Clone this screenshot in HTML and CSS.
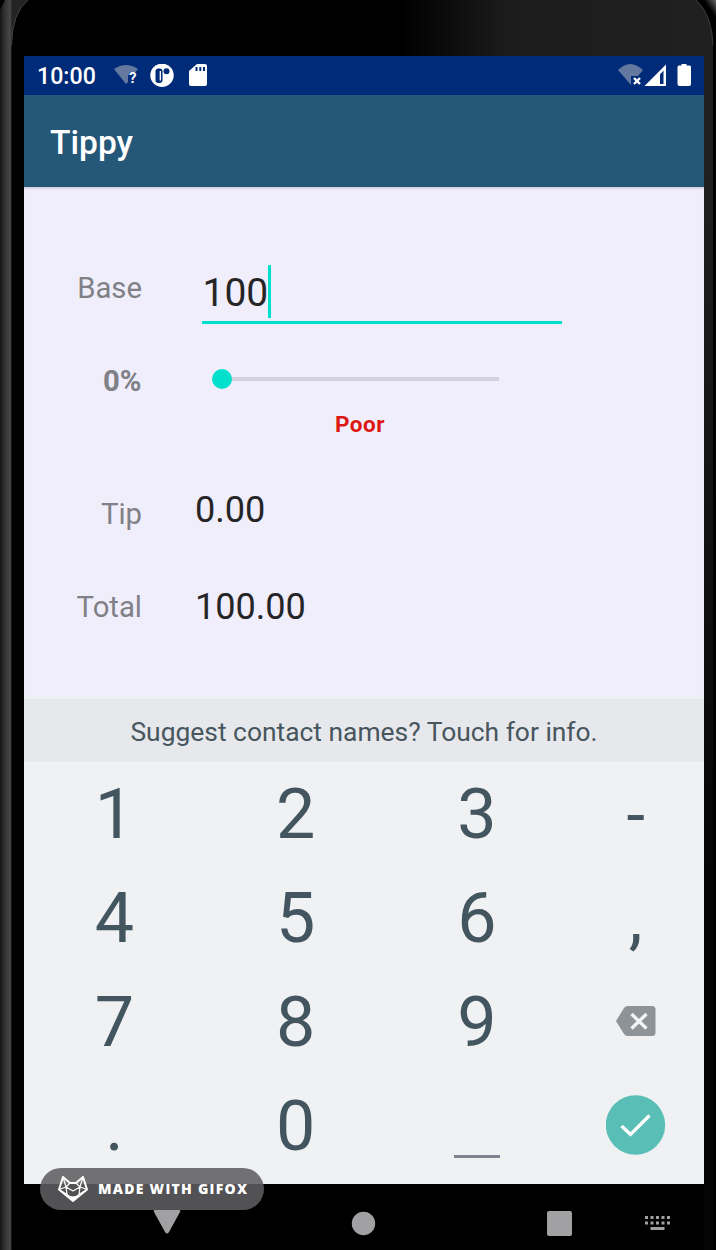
FILE: index.html
```html
<!DOCTYPE html>
<html lang="en">
<head>
<meta charset="utf-8">
<title>Tippy</title>
<link rel="stylesheet" href="styles.css">
</head>
<body>
<div class="device">
  <svg class="bezel" viewBox="0 0 716 1250">
    <defs>
      <linearGradient id="edge" x1="0" x2="12" y1="0" y2="0" gradientUnits="userSpaceOnUse"><stop offset="0" stop-color="#141414"/><stop offset=".3" stop-color="#2c2c2c"/><stop offset=".85" stop-color="#484848"/><stop offset="1" stop-color="#242424"/></linearGradient>
      <linearGradient id="glass" x1="400" x2="716" y1="0" y2="0" gradientUnits="userSpaceOnUse"><stop offset="0" stop-color="#000"/><stop offset=".35" stop-color="#1c1c1c"/><stop offset="1" stop-color="#202020"/></linearGradient>
      <linearGradient id="fade" x1="0" x2="0" y1="0" y2="1"><stop offset=".1" stop-color="#000" stop-opacity="0"/><stop offset=".7" stop-color="#000" stop-opacity=".85"/></linearGradient>
      <linearGradient id="corner" x1="702" x2="716" y1="10" y2="0" gradientUnits="userSpaceOnUse"><stop offset=".4" stop-color="#000"/><stop offset="1" stop-color="#666"/></linearGradient>
    </defs>
    <path fill="url(#edge)" d="M5 0H40V1250H0V10Z"/>
    <path fill="#000" d="M690 0H716V1250H690Z"/>
    <path fill="url(#corner)" d="M700 0H716V18Z"/>
    <path fill="url(#glass)" d="M28 0H696Q712 14 713 45V1250H11.500V45Q12 13 28 0Z"/>
    <path fill="url(#fade)" d="M704 40H716V1250H704Z"/>
    <path fill="none" stroke="#444" d="M28 0Q12 13 11.500 45"/>
    <path fill="none" stroke="#3c3c3c" d="M696 0Q712 14 713 45"/>
  </svg>
  <main class="screen">
    <header class="status">
      <span class="clock">10:00</span>
      <svg class="status-left" width="96" height="26" viewBox="0 0 96 26">
        <path fill="#65789f" d="M0 5Q12-3 24 5L21.500 8H16L14 12v6L12 20Z"/>
        <text class="query" x="15" y="19">?</text>
        <circle cx="48" cy="11.300" r="11.700" fill="#fff"/>
        <rect x="41.500" y="4.500" width="7" height="14.500" rx="3" fill="#002b78"/>
        <circle cx="52.500" cy="7.200" r="3" fill="#002b78"/>
        <path stroke="#fff" stroke-width="1.300" d="M46.300 7v9.500"/>
        <path fill="#fff" d="M83 0h8q2 0 2 2v18q0 2-2 2H77q-2 0-2-2V7Z"/>
        <path stroke="#002b78" stroke-width="2" d="M82.500 3v4M86.300 3v4M90 3v4"/>
      </svg>
      <svg class="status-right" width="76" height="26" viewBox="0 0 76 26">
        <path fill="#65789f" d="M1 6Q13-6 26 6L21 12H14V21Z"/>
        <path stroke="#fff" stroke-width="2.400" d="m17 14 6 6m0-6-6 6"/>
        <path fill="#fff" fill-rule="evenodd" d="M27.500 22 49 .5V22ZM43 10.500V20h3.500V6.500Z"/>
        <path fill="#fff" d="M64.500 0h5v1.500h3q1.500 0 1.500 1.500v17q0 2-2 2h-9.500Q60.500 22 60.500 20V3q0-1.500 1.500-1.500h2.500Z"/>
      </svg>
    </header>
    <div class="appbar"><h1>Tippy</h1></div>
    <section class="form">
      <div class="row base"><label>Base</label><div class="input"><span>100</span><i class="caret"></i></div></div>
      <div class="row rate"><label class="percent">0%</label><div class="slider"><i class="thumb"></i></div></div>
      <div class="rating">Poor</div>
      <div class="row tip"><label>Tip</label><output>0.00</output></div>
      <div class="row total"><label>Total</label><output>100.00</output></div>
    </section>
    <div class="suggest">Suggest contact names? Touch for info.</div>
    <section class="keys">
      <b>1</b><b>2</b><b>3</b><b class="dash">-</b>
      <b>4</b><b>5</b><b>6</b><b class="comma">,</b>
      <b>7</b><b>8</b><b>9</b>
      <svg class="erase" width="40" height="30" viewBox="0 0 40 30"><path fill="#8d9397" d="M0 15 8 2Q9.500 0 12 0H36Q39.500 0 39.500 3.500v23Q39.500 30 36 30H12q-2.500 0-4-2Z"/><path stroke="#f2f3f4" stroke-width="3.400" d="m15.500 8 15 14.500m0-14.500-15 14.500"/></svg>
      <b>.</b><b>0</b><i class="space"></i>
      <svg class="done" width="60" height="60" viewBox="0 0 60 60"><circle cx="29.500" cy="30" r="29.700" fill="#58beb6"/><path fill="none" stroke="#fff" stroke-width="3.400" d="m15.500 31 9 8.500L43.500 20.500"/></svg>
    </section>
    <nav class="nav">
      <svg width="680" height="66" viewBox="0 0 680 66" fill="#a1a1a4">
        <path d="M131 26h24q2 0 1 2l-11 20q-2 3-4 0L130 28q-1-2 1-2Z"/>
        <circle cx="339.500" cy="39.500" r="11.700"/><rect x="523" y="27" width="25" height="25" rx="2"/>
        <path d="M621 32h3v3h-3zm5.500 0h3v3h-3zm5.500 0h3v3h-3zm5.500 0h3v3h-3zm5.500 0h3v3h-3zM621 37.500h3v3h-3zm5.500 0h3v3h-3zm5.500 0h3v3h-3zm5.500 0h3v3h-3zm5.500 0h3v3h-3zM626.500 43h14v3h-14z"/>
      </svg>
    </nav>
  </main>
  <div class="badge">
    <svg width="32" height="28" viewBox="0 0 32 28" fill="none" stroke="#fff" stroke-linejoin="round"><path stroke-width="2" d="M6 2 2 14.500 16 26l14-11.500L26 2l-7 6h-6Z"/><path stroke-width="1.200" d="M6 2l3 10 7 4 7-4 3-10M2 14.500 9 12l4-4m6 0 4 4 7 2.500M9 12l1 7.500L2 14.500M23 12l-1 7.500 8-5M10 19.500 13 22M22 19.500 19 22"/><path fill="#fff" d="m11 21 5 1 5-1-5 5Z"/></svg>
    <svg width="152" height="20" viewBox="0 0 152 20"><text class="made" x="0" y="15" textLength="149">MADE WITH GIFOX</text></svg>
  </div>
</div>
</body>
</html>
```
FILE: styles.css
```css
* { box-sizing: border-box; }
body { margin: 0; background: #000; font-family: Roboto, "Noto Sans", sans-serif; }
svg { display: block; }
.device { position: relative; width: 716px; height: 1250px; overflow: hidden; padding: 56px 12px 0 24px; }
.bezel { position: absolute; left: 0; top: 0; width: 716px; height: 1250px; }
.screen { position: relative; width: 680px; }
.screen::before { content: ""; position: absolute; left: -12px; top: 0; width: 12px; height: 1194px; background: #000; }
.status { height: 39px; background: #002b78; color: #fff; display: flex; align-items: flex-start; padding: 8px 11px 0 13px; }
.clock { font-size: 23.2px; line-height: 25px; font-weight: 500; width: 77px; }
.query { font: 700 15px Roboto, sans-serif; fill: #fff; }
.status-right { margin-left: auto; }
.appbar { height: 92px; background: #255779; padding: 30px 26px; }
h1 { color: #fff; font-size: 33.6px; line-height: 36px; font-weight: 500; margin: 0; }
.form { height: 509px; background: #f0eefb; padding-top: 75px; box-shadow: inset 0 3px 3px -2px #c5c3d2; }
.row { display: flex; align-items: flex-start; }
label { width: 118px; text-align: right; color: #808087; font-size: 29.3px; line-height: 34px; }
.base { height: 102px; }
.base label { padding-top: 9px; }
.input { width: 360px; height: 62px; margin-left: 60px; border-bottom: 3px solid #00e0cd; display: flex; font-size: 39px; line-height: 62px; color: #252528; }
.input span { padding-left: .5px; }
.caret { width: 3px; height: 53px; margin-top: 3px; background: #00e0cd; }
.rate { height: 45px; }
.percent { font-weight: 700; padding-right: .5px; }
.slider { width: 277px; height: 4px; background: #d3d1de; margin: 13px 0 0 80px; display: flex; align-items: center; }
.thumb { width: 20px; height: 20px; border-radius: 50%; background: #00e0cd; margin-left: -10px; flex: none; }
.rating { color: #dd1711; font-size: 22.5px; line-height: 30px; font-weight: 700; letter-spacing: .5px; padding-left: 311px; height: 71px; }
.tip { height: 97px; }
.tip label { padding-top: 17px; }
.total label { padding-top: 13px; }
output { margin-left: 53px; font-size: 36.1px; line-height: 60px; color: #252528; }
.suggest { height: 67px; background: #e6e8eb; border-top: 3px solid #eef0f2; border-bottom: 1px solid #f4f5f6; text-align: center; font-size: 26.4px; line-height: 66px; color: #47565e; }
.keys { height: 421px; background: #eff1f2; display: grid; grid-template-columns: 181px 181.500px 181px 136.500px; grid-template-rows: repeat(4, 104px); align-items: center; justify-items: center; color: #435660; }
.keys b { font-weight: 400; font-size: 70px; line-height: 102px; margin-bottom: 2px; }
.keys .dash { font-size: 67px; padding-top: 1px; }
.keys .erase { margin-bottom: 5px; }
.keys .done { margin-bottom: 5px; }
.space { width: 46px; height: 3px; background: #808390; margin-top: 58px; }
.nav { position: relative; height: 66px; background: #000; }
.badge { position: absolute; left: 40px; top: 1168px; width: 224px; height: 42px; border-radius: 21px; background: linear-gradient(#717173 0 16px, #525254 16px); display: flex; align-items: center; padding-left: 17px; gap: 9px; }
.made { font-family: "Open Sans", sans-serif; font-size: 14px; font-weight: 800; fill: #fff; }
```
